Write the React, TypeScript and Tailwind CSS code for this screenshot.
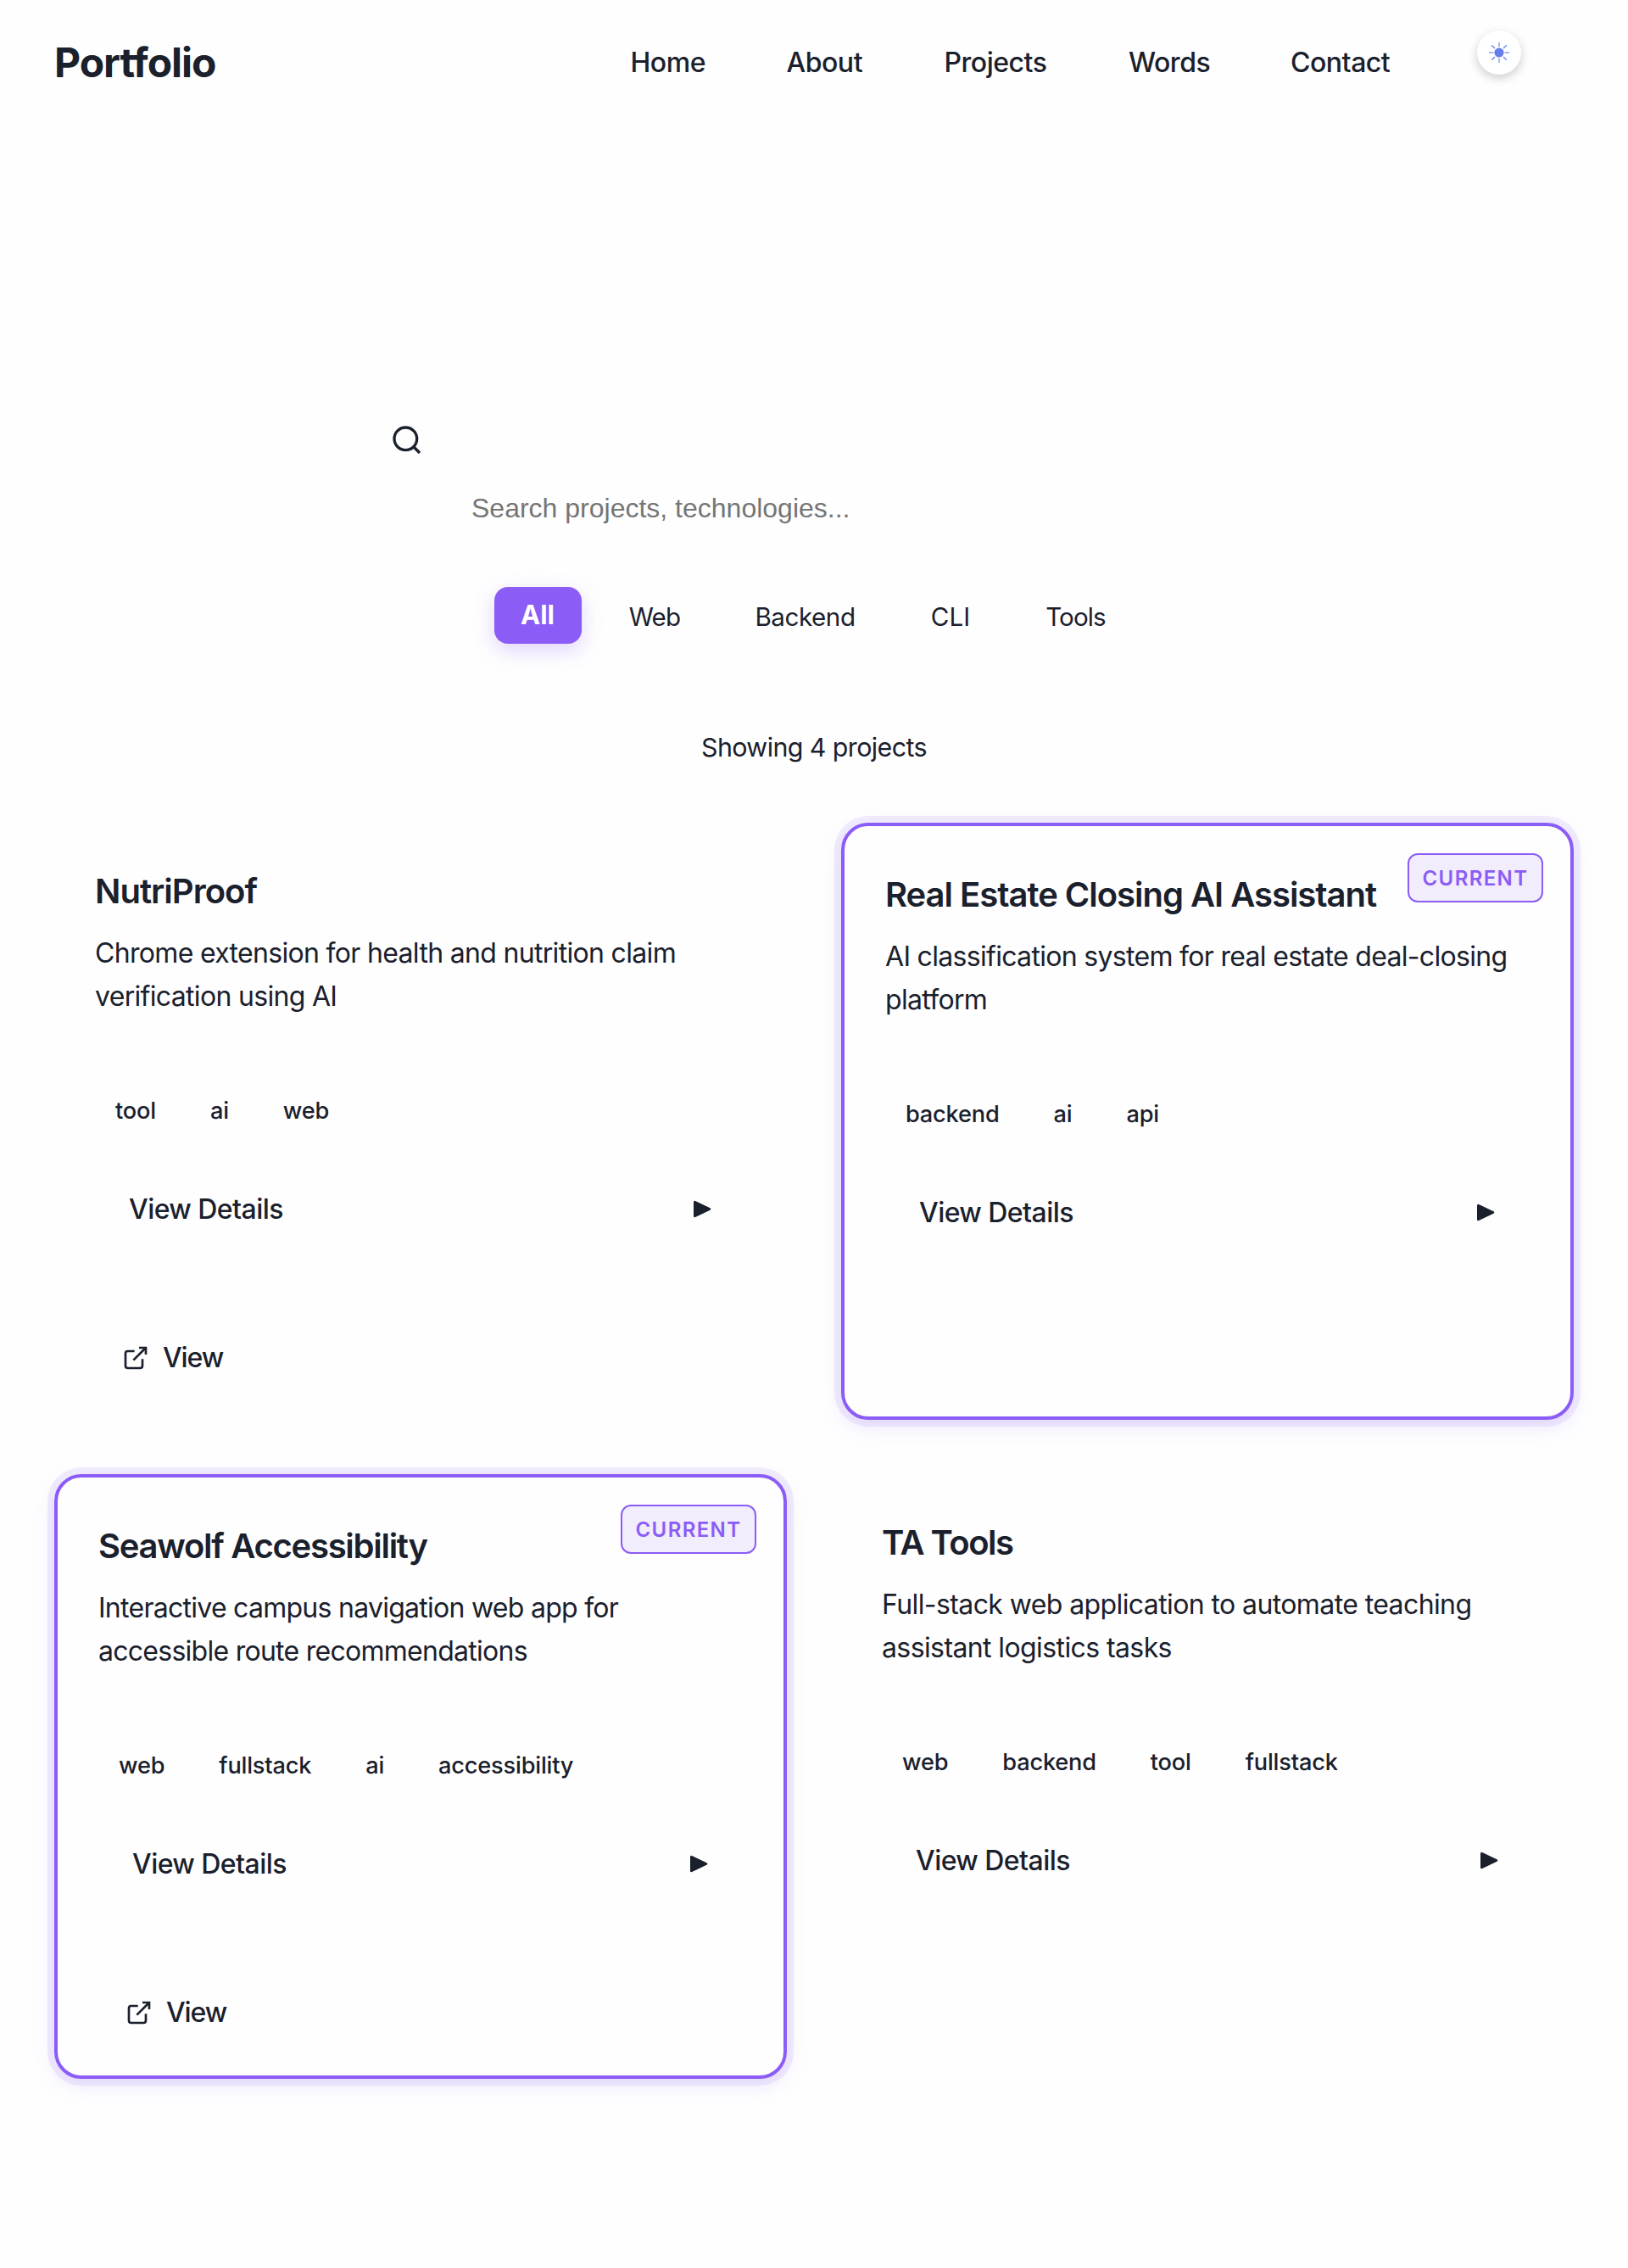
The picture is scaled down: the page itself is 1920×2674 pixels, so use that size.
const NAV = [
  { label: "Home", cls: "w-[88px]" },
  { label: "About", cls: "w-[90px]" },
  { label: "Projects", cls: "w-[121.5px]" },
  { label: "Words", cls: "w-[95px]" },
  { label: "Contact", cls: "w-[119px]" },
];

const FILTERS = [
  { label: "Web", cls: "w-[125px] tracking-[-0.9px]" },
  { label: "Backend", cls: "w-[182px] tracking-[-0.45px]" },
  { label: "CLI", cls: "w-[113px] tracking-[0px]" },
  { label: "Tools", cls: "w-[134px] tracking-[-0.9px]" },
];

type Project = {
  title: string;
  titleCls: string;
  lines: string[];
  descCls: string;
  tags: string[];
  current?: boolean;
  link?: boolean;
};

const PROJECTS: Project[] = [
  {
    title: "NutriProof",
    titleCls: "tracking-[-0.98px]",
    lines: ["Chrome extension for health and nutrition claim", "verification using AI"],
    descCls: "tracking-[-0.68px]",
    tags: ["tool", "ai", "web"],
    link: true,
  },
  {
    title: "Real Estate Closing AI Assistant",
    titleCls: "tracking-[-1.02px]",
    lines: ["AI classification system for real estate deal-closing", "platform"],
    descCls: "tracking-[-0.69px]",
    tags: ["backend", "ai", "api"],
    current: true,
  },
  {
    title: "Seawolf Accessibility",
    titleCls: "tracking-[-1.27px]",
    lines: ["Interactive campus navigation web app for", "accessible route recommendations"],
    descCls: "tracking-[-0.73px]",
    tags: ["web", "fullstack", "ai", "accessibility"],
    current: true,
    link: true,
  },
  {
    title: "TA Tools",
    titleCls: "tracking-[-1.5px]",
    lines: ["Full-stack web application to automate teaching", "assistant logistics tasks"],
    descCls: "tracking-[-0.6px]",
    tags: ["web", "backend", "tool", "fullstack"],
  },
];

function SunIcon() {
  return (
    <svg width="26" height="26" viewBox="-13 -13 26 26" stroke="#667eea">
      <circle r="5.6" fill="#667eea" stroke="none" />
      <g strokeWidth="2" opacity="0.55">
        <path d="M0-12v5.3M0 12V6.7M-12 0h5.3M12 0H6.7" />
      </g>
      <g strokeWidth="1.5" opacity="0.85">
        <path d="M-8.8-8.8l3.7 3.7M8.8-8.8L5.1-5.1M-8.8 8.8l3.7-3.7M8.8 8.8L5.1 5.1" />
      </g>
    </svg>
  );
}

function SearchIcon() {
  return (
    <svg width="40" height="40" viewBox="0 0 24 24" fill="none" stroke="currentColor" strokeWidth="2">
      <circle cx="11" cy="11" r="8" />
      <path d="m21 21-4.35-4.35" />
    </svg>
  );
}

function ExternalIcon() {
  return (
    <svg width="32" height="32" viewBox="0 0 24 24" fill="none" stroke="currentColor" strokeWidth="2">
      <path d="M18 13v6a2 2 0 0 1-2 2H5a2 2 0 0 1-2-2V8a2 2 0 0 1 2-2h6" />
      <path d="M15 3h6v6" />
      <path d="M10 14 21 3" />
    </svg>
  );
}

function PlayIcon() {
  return (
    <svg width="22" height="22" viewBox="0 0 22 22" fill="currentColor" stroke="currentColor" strokeWidth="3" strokeLinejoin="round">
      <path d="M1.5 2.3v16.4L18.8 10.5z" />
    </svg>
  );
}

function Card({ p }: { p: Project }) {
  return (
    <article
      className={
        p.current
          ? "relative rounded-[32px] border-4 border-[#8b5cf6] p-12 shadow-[0_0_0_8px_rgba(139,92,246,0.1),0_8px_24px_rgba(139,92,246,0.15)]"
          : "relative p-12"
      }
    >
      {p.current && (
        <span className="absolute right-8 top-8 flex h-[58px] w-[160px] items-center justify-center rounded-xl border-2 border-[#8b5cf6] bg-[#8b5cf6]/10 pt-0.5 text-[24px] font-semibold tracking-[1.38px] text-[#8b5cf6]">
          CURRENT
        </span>
      )}
      <h3 className={"whitespace-nowrap pt-px text-[40px] font-semibold leading-[64px] " + p.titleCls}>{p.title}</h3>
      <p className={"mt-[15px] whitespace-nowrap text-[32px] leading-[51.2px] " + p.descCls}>
        {p.lines[0]}
        <br />
        {p.lines[1]}
      </p>
      <div className="mt-[78px] flex h-16 items-center gap-4 text-[27.2px] font-medium tracking-[-0.2px]">
        {p.tags.map((t) => (
          <span key={t} className="px-6">
            {t}
          </span>
        ))}
      </div>
      <div className="mt-9 flex h-24 items-center justify-between px-10 text-[32px] font-medium tracking-[-0.55px]">
        <span>View Details</span>
        <PlayIcon />
      </div>
      {p.link && (
        <a className="mt-[95px] flex h-16 items-center gap-4 pl-8 text-[32px] font-medium tracking-[-1.1px]">
          <ExternalIcon />
          View
        </a>
      )}
    </article>
  );
}

export default function App() {
  return (
    <div className="min-h-[2674px] w-[1920px] bg-[#fefefe] font-[Inter,sans-serif] text-[#1a202c]">
      <header className="flex h-[148px] items-center pl-16 pr-[126px]">
        <div className="text-[48px] font-bold tracking-[-1.02px]">Portfolio</div>
        <nav className="ml-auto mr-[101px] flex gap-24 text-[32px] font-medium tracking-[-0.48px]">
          {NAV.map((n) => (
            <a key={n.label} className={n.cls}>
              {n.label}
            </a>
          ))}
        </nav>
        <button className="mt-9 flex size-[52px] items-center justify-center self-start rounded-full bg-white shadow-[0_4px_12px_rgba(0,0,0,0.2)]">
          <SunIcon />
        </button>
      </header>

      <main className="px-16">
        <section className="mx-auto w-[1000px] pt-[351px]">
          <SearchIcon />
          <input
            placeholder="Search projects, technologies..."
            className="mt-7 block h-16 w-full bg-transparent pl-24 font-['Liberation_Sans',sans-serif] text-[32px] placeholder:text-[#757575]"
          />
        </section>

        <div className="mr-0.5 mt-[63px] flex h-[67px] justify-center gap-6 text-[29.6px]">
          <button className="w-[103px] -translate-y-0.5 rounded-2xl bg-[#8b5cf6] text-[31px] font-bold text-white shadow-[0_8px_24px_rgba(139,92,246,0.25)]">
            All
          </button>
          {FILTERS.map((f) => (
            <button key={f.label} className={f.cls}>
              {f.label}
            </button>
          ))}
        </div>

        <p className="mt-[88px] text-center text-[30.4px] leading-[64px] tracking-[-0.585px]">Showing 4 projects</p>

        <div className="mt-[57px] grid grid-cols-2 grid-rows-[704px_713px] gap-16">
          {PROJECTS.map((p) => (
            <Card key={p.title} p={p} />
          ))}
        </div>
      </main>
    </div>
  );
}
